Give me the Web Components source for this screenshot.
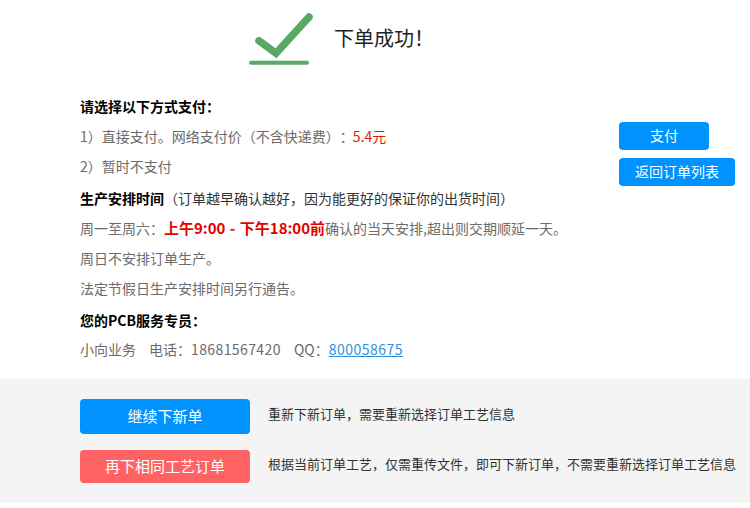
<!DOCTYPE html>
<html lang="zh-CN">
<head>
<meta charset="utf-8">
<title>下单成功</title>
<style>
  html, body { margin: 0; background: #fff; }
  body { font: 14px/30px "Noto Sans CJK SC", "Liberation Sans", sans-serif; color: #666; overflow: hidden; text-spacing-trim: space-all; }
</style>
</head>
<body>
<order-header>下单成功！</order-header>
<order-info></order-info>
<order-next></order-next>

<script>
class OrderHeader extends HTMLElement {
  constructor() {
    super();
    this.attachShadow({ mode: 'open' });
    this.shadowRoot.innerHTML = `
      <style>
        :host { display: flex; height: 92px; padding-left: 249px; box-sizing: border-box; }
        svg { width: 64px; height: 54px; margin-top: 13px; flex: none; }
        .title { margin: 23px 0 0 21px; font-size: 20px; line-height: 30px; color: #222; }
      </style>
      <svg viewBox="0 0 64 54">
        <path d="M10 27.7 L27 40.3 L60 4" fill="none" stroke="#5aa864" stroke-width="7.5" stroke-linecap="round" stroke-linejoin="miter"/>
        <path d="M2 49.7 H58" fill="none" stroke="#5aa864" stroke-width="4" stroke-linecap="round"/>
      </svg>
      <div class="title"><slot></slot></div>`;
  }
}

class PayButton extends HTMLElement {
  constructor() {
    super();
    this.attachShadow({ mode: 'open' });
    this.shadowRoot.innerHTML = `
      <style>
        :host { display: block; height: 28px; border-radius: 4px; background: #0093ff; color: #fff;
                font-size: 14px; line-height: 26px; text-align: center; }
      </style>
      <slot></slot>`;
  }
}

class NextRow extends HTMLElement {
  constructor() {
    super();
    this.attachShadow({ mode: 'open' });
    this.shadowRoot.innerHTML = `
      <style>
        :host { display: flex; align-items: center; }
        .btn { flex: none; width: 170px; height: var(--h, 35px); line-height: calc(var(--h, 35px) - 2px); border-radius: 4px;
               background: var(--bg, #0093ff); color: #fff; font-size: 15px; text-align: center; }
        .desc { margin: -6px 0 0 18px; font-size: 13px; line-height: 20px; color: #333; white-space: nowrap; }
      </style>
      <div class="btn"><slot name="btn"></slot></div>
      <div class="desc"><slot></slot></div>`;
  }
}

class OrderInfo extends HTMLElement {
  constructor() {
    super();
    this.attachShadow({ mode: 'open' });
    this.shadowRoot.innerHTML = `
      <style>
        :host { display: block; height: 287px; padding-left: 80px; color: #6b6b6b; font-size: 14px; line-height: 28px; }
        .pay { display: flex; }
        .pay .rows { flex: 1; }
        .actions { flex: none; width: 116px; margin: 30px 15px -4px 0; display: flex; flex-direction: column; gap: 8px; }
        .actions pay-button:first-child { width: 90px; }
        p { margin: 0; height: 30px; white-space: nowrap; }
        b { color: #000; font-weight: 700; }
        .black { color: #333; }
        .price { color: #d81e06; margin-left: -1px; }
        .hot { color: #e60000; font-weight: 700; font-size: 15px; word-spacing: 1px; }
        a { color: #2f8fe0; text-decoration: underline; letter-spacing: .5px; }
        .gap { margin-left: 13px; }
        .tel { letter-spacing: .4px; }
        .sec { margin-top: 2px; }
        .last { margin-top: -1px; }
      </style>
      <div class="pay">
        <div class="rows">
          <p><b>请选择以下方式支付：</b></p>
          <p>1）直接支付。网络支付价（不含快递费）：<span class="price">5.4元</span></p>
          <p>2）暂时不支付</p>
        </div>
        <div class="actions">
          <pay-button>支付</pay-button>
          <pay-button>返回订单列表</pay-button>
        </div>
      </div>
      <p class="sec"><b>生产安排时间</b><span class="black">（订单越早确认越好，因为能更好的保证你的出货时间）</span></p>
      <p>周一至周六：<span class="hot">上午9:00 - 下午18:00前</span>确认的当天安排,超出则交期顺延一天。</p>
      <p>周日不安排订单生产。</p>
      <p>法定节假日生产安排时间另行通告。</p>
      <p class="sec"><b>您的PCB服务专员：</b></p>
      <p class="last">小向业务<span class="gap">电话：</span><span class="tel">18681567420</span><span class="gap">QQ：</span><a href="#">800058675</a></p>`;
  }
}

class OrderNext extends HTMLElement {
  constructor() {
    super();
    this.attachShadow({ mode: 'open' });
    this.shadowRoot.innerHTML = `
      <style>
        :host { display: flex; flex-direction: column; gap: 16px; height: 124px; box-sizing: border-box;
                padding: 20px 0 0 80px; background: #f4f4f4; }
      </style>
      <next-row>
        <span slot="btn">继续下新单</span>
        重新下新订单，需要重新选择订单工艺信息
      </next-row>
      <next-row style="--h:33px; --bg:#ff6262">
        <span slot="btn">再下相同工艺订单</span>
        根据当前订单工艺，仅需重传文件，即可下新订单，不需要重新选择订单工艺信息
      </next-row>`;
  }
}

customElements.define('order-header', OrderHeader);
customElements.define('pay-button', PayButton);
customElements.define('next-row', NextRow);
customElements.define('order-info', OrderInfo);
customElements.define('order-next', OrderNext);
</script>
</body>
</html>
